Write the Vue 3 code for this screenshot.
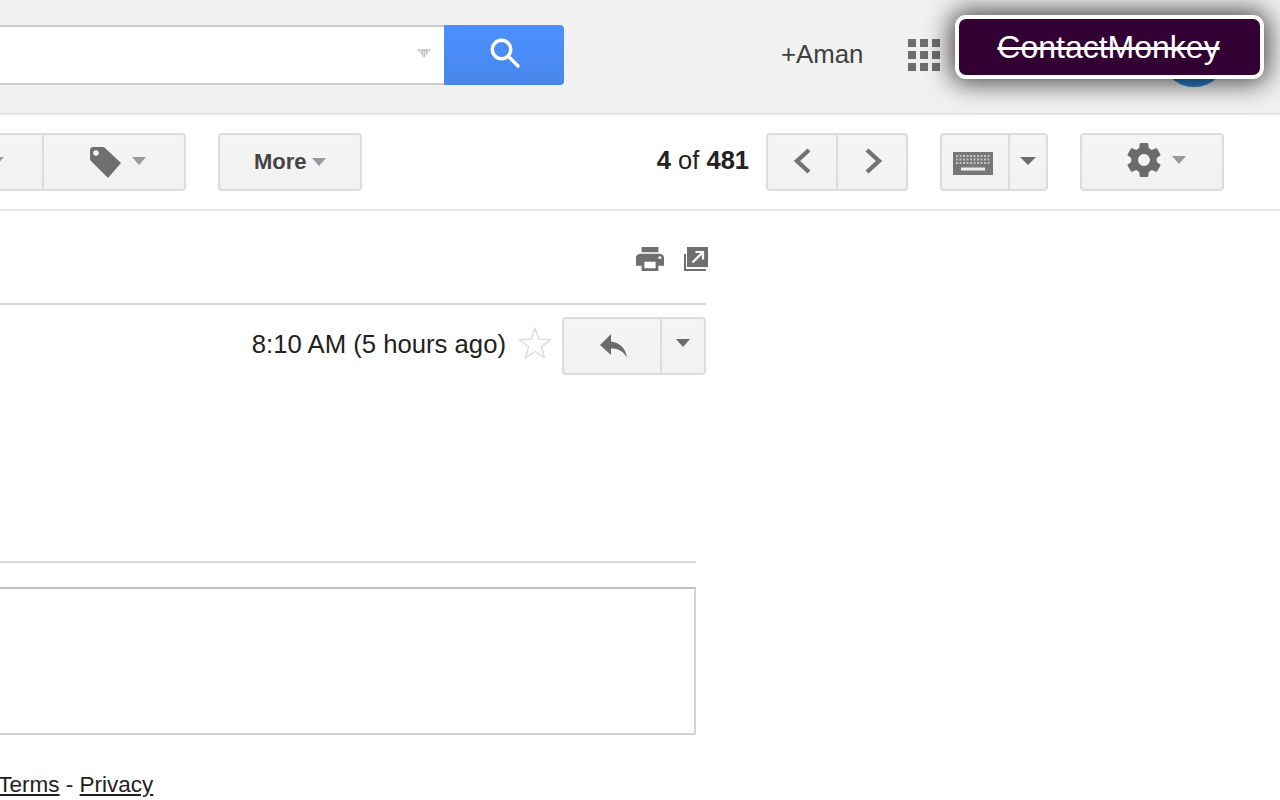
<script setup>
const apps = Array.from({ length: 9 }, (_, i) => i)
</script>

<template>
  <div class="page">
    <header class="top">
      <div class="search">
        <div class="search-field">
          <svg class="search-caret" width="14" height="9" viewBox="0 0 14 9">
            <path d="M0 0h14L7 9z" fill="#c4c4c4" />
            <path d="M3.500 0v5M6 2v7M8.500 2v6M11 0v3" stroke="#ececec" stroke-width="1" />
          </svg>
        </div>
        <button class="search-btn" aria-label="Search">
          <svg width="30" height="30" viewBox="0 0 30 30" fill="none" stroke="#fff" stroke-width="3.4">
            <circle cx="11.500" cy="11.500" r="9.200" />
            <path d="M18.500 18.500L28 28" stroke-linecap="round" />
          </svg>
        </button>
      </div>
      <span class="user">+Aman</span>
      <div class="apps">
        <i v-for="a in apps" :key="a"></i>
      </div>
      <div class="avatar"></div>
    </header>

    <div class="badge">ContactMonkey</div>

    <div class="toolbar">
      <div class="btn labels">
        <div class="seg seg-move"><i class="caret light"></i></div>
        <div class="seg seg-tag">
          <svg width="31" height="31" viewBox="0 0 31 31">
            <path fill-rule="evenodd" fill="#6f6f6f" d="M3.500 0h9.500a3 3 0 0 1 2 .9L31 16 18 31 1 14a3 3 0 0 1-1-2.200V3.500A3.500 3.500 0 0 1 3.500 0zM6 3.200a2.800 2.800 0 1 0 0 5.600 2.800 2.800 0 0 0 0-5.600z" />
          </svg>
          <i class="caret light"></i>
        </div>
      </div>
      <div class="btn more">
        <span>More</span>
        <i class="caret light"></i>
      </div>

      <div class="count"><b>4</b> of <b>481</b></div>

      <div class="btn nav">
        <div class="seg seg-prev">
          <svg width="18" height="26" viewBox="0 0 18 26" fill="none" stroke="#737373" stroke-width="4.4">
            <path d="M16 2L4 13l12 11" />
          </svg>
        </div>
        <div class="seg seg-next">
          <svg width="18" height="26" viewBox="0 0 18 26" fill="none" stroke="#737373" stroke-width="4.4">
            <path d="M2 2l12 11L2 24" />
          </svg>
        </div>
      </div>

      <div class="btn keys">
        <div class="seg seg-key">
          <svg width="40" height="23" viewBox="0 0 40 23">
            <rect width="40" height="23" fill="#777" />
            <path d="M3 4h34M3 7.500h34M3 11h34" stroke="#c2c2c2" stroke-width="2" stroke-dasharray="2 1.500" />
            <rect x="8" y="15.500" width="24" height="3" fill="#eee" />
          </svg>
        </div>
        <div class="seg seg-keycaret"><i class="caret dark wide"></i></div>
      </div>

      <div class="btn settings">
        <svg width="34" height="34" viewBox="2.200 2 19.600 20">
          <path fill="#6b6b6b" d="M19.430 12.980c.04-.32.07-.64.07-.98s-.03-.66-.07-.98l2.110-1.650c.19-.15.24-.42.12-.64l-2-3.460c-.12-.22-.39-.3-.61-.22l-2.490 1c-.52-.4-1.080-.73-1.690-.98l-.38-2.650C14.460 2.180 14.250 2 14 2h-4c-.25 0-.46.18-.49.42l-.38 2.650c-.61.25-1.170.59-1.690.98l-2.490-1c-.23-.09-.49 0-.61.22l-2 3.460c-.13.22-.07.49.12.64l2.110 1.650c-.04.32-.07.65-.07.98s.03.66.07.98l-2.110 1.650c-.19.15-.24.42-.12.64l2 3.460c.12.22.39.3.61.22l2.490-1c.52.4 1.080.73 1.690.98l.38 2.650c.03.24.24.42.49.42h4c.25 0 .46-.18.49-.42l.38-2.650c.61-.25 1.170-.59 1.690-.98l2.490 1c.23.09.49 0 .61-.22l2-3.460c.12-.22.07-.49-.12-.64l-2.110-1.650zM12 15.500c-1.930 0-3.500-1.570-3.500-3.500s1.570-3.500 3.500-3.500 3.500 1.570 3.500 3.500-1.570 3.500-3.500 3.500z" />
        </svg>
        <i class="caret light"></i>
      </div>
    </div>

    <main class="mail">
      <div class="mail-actions">
        <svg width="28" height="24" viewBox="2 3 20 18" preserveAspectRatio="none">
          <path fill="#6f6f6f" d="M19 8H5c-1.660 0-3 1.340-3 3v6h4v4h12v-4h4v-6c0-1.660-1.340-3-3-3zm-3 11H8v-5h8v5zm3-7c-.55 0-1-.45-1-1s.45-1 1-1 1 .45 1 1-.45 1-1 1zm-1-9H6v4h12V3z" />
        </svg>
        <svg width="24" height="24" viewBox="0 0 24 24">
          <path fill="#6f6f6f" d="M3 0h21v20H3z" />
          <path d="M1 7v16h21" fill="none" stroke="#6f6f6f" stroke-width="2" />
          <path d="M8.500 15.500L18 6M11.500 5h7.500v7.500" fill="none" stroke="#fff" stroke-width="2.200" />
        </svg>
      </div>

      <div class="mail-meta">
        <span class="time">8:10 AM (5 hours ago)</span>
        <svg class="star" width="32" height="32" viewBox="0 0 32 32">
          <path d="M16 1.500l4 10.700 11.200.5-8.800 7 3 10.800L16 24.400 6.600 30.500l3-10.800-8.800-7 11.200-.5z" fill="#fff" stroke="#d9d9d9" stroke-width="1.300" />
        </svg>
        <div class="btn reply">
          <div class="seg seg-reply">
            <svg width="27" height="24" viewBox="0 0 27 24">
              <path fill="#6b6b6b" d="M11 0L0 11l11 10v-6.400c7 0 12 2 16 9.400-1-9-7-15.500-16-16.500z" />
            </svg>
          </div>
          <div class="seg seg-replycaret"><i class="caret dark"></i></div>
        </div>
      </div>

      <div class="rule"></div>
      <div class="composer"></div>
      <p class="legal"><a>Terms</a> - <a>Privacy</a></p>
    </main>
  </div>
</template>

<style>
html,
body {
  margin: 0;
  background: #fff;
  overflow: hidden;
}
</style>

<style scoped>
.page {
  position: relative;
  width: 1280px;
  height: 800px;
  overflow: hidden;
  background: #fff;
  font-family: "Liberation Sans", Arial, sans-serif;
  color: #222;
}

.top {
  display: flex;
  align-items: flex-start;
  box-sizing: border-box;
  height: 115px;
  padding-top: 25px;
  background: #f1f1f1;
  border-bottom: 2px solid #e5e5e5;
}

.search {
  display: flex;
  flex: none;
  width: 564px;
  height: 60px;
}

.search-field {
  flex: 1;
  display: flex;
  align-items: center;
  justify-content: flex-end;
  padding-right: 13px;
  background: #fff;
  border-top: 2px solid #ccc;
  border-bottom: 2px solid #ccc;
}

.search-caret {
  margin-bottom: 4px;
}

.search-btn {
  flex: none;
  display: flex;
  align-items: center;
  justify-content: center;
  width: 120px;
  padding: 0 0 4px 2px;
  border: 0;
  border-radius: 0 4px 4px 0;
  background: linear-gradient(#4d90fe, #4787ed);
}

.user {
  flex: none;
  width: 83px;
  margin-left: 217px;
  font-size: 25.8px;
  line-height: 58px;
  color: #404040;
  white-space: nowrap;
}

.apps {
  flex: none;
  display: grid;
  grid-template-columns: repeat(3, 8px);
  grid-auto-rows: 8px;
  gap: 4px;
  margin-left: 44px;
  margin-top: 14px;
}

.apps i {
  background: #6e6e6e;
}

.avatar {
  flex: none;
  width: 68px;
  height: 68px;
  margin-left: 220px;
  margin-top: -6px;
  border-radius: 50%;
  background: #2b84d2;
}

.badge {
  position: absolute;
  top: 15px;
  left: 955px;
  box-sizing: border-box;
  width: 309px;
  height: 64px;
  padding-right: 2px;
  border: 4px solid #fff;
  border-radius: 11px;
  background: #303;
  box-shadow: 0 0 26px 4px rgba(0, 0, 0, 0.72);
  color: #fff;
  font-size: 32px;
  line-height: 56px;
  text-align: center;
  text-decoration: line-through;
  white-space: nowrap;
}

.toolbar {
  display: flex;
  align-items: flex-start;
  box-sizing: border-box;
  height: 96px;
  padding: 18px 56px 0 0;
  border-bottom: 2px solid #e5e5e5;
}

.btn {
  flex: none;
  display: flex;
  box-sizing: border-box;
  height: 58px;
  border: 2px solid #dcdcdc;
  border-radius: 4px;
  background: linear-gradient(#f5f5f5, #f1f1f1);
}

.seg {
  display: flex;
  align-items: center;
  box-sizing: border-box;
}

.seg + .seg {
  border-left: 2px solid #dcdcdc;
}

.caret {
  flex: none;
  display: block;
  width: 0;
  height: 0;
  border-style: solid;
  border-width: 8px 7px 0;
  border-color: #999 transparent transparent;
}

.caret.dark {
  border-top-color: #6b6b6b;
}

.caret.wide {
  border-width: 8px 8px 0;
}

.labels {
  width: 246px;
  margin-left: -60px;
}

.seg-move {
  flex: none;
  width: 100px;
  justify-content: flex-end;
  padding: 0 38px 2px 0;
}

.seg-tag {
  flex: 1;
  gap: 11px;
  padding-left: 46px;
}

.seg-tag .caret {
  margin-bottom: 2px;
}

.more {
  align-items: center;
  gap: 5px;
  width: 144px;
  margin-left: 32px;
  padding-left: 34px;
  color: #444;
  font-size: 22px;
  font-weight: 700;
}

.count {
  margin-left: auto;
  font-size: 25.5px;
  line-height: 54px;
  white-space: nowrap;
}

.nav {
  width: 142px;
  margin-left: 17px;
}

.seg-prev {
  flex: none;
  width: 68px;
  justify-content: center;
  padding-bottom: 2px;
}

.seg-next {
  flex: 1;
  justify-content: center;
  padding: 0 0 2px 4px;
}

.keys {
  width: 108px;
  margin-left: 32px;
}

.seg-key {
  flex: none;
  width: 66px;
  padding: 3px 0 0 11px;
}

.seg-keycaret {
  flex: 1;
  justify-content: center;
  padding-bottom: 2px;
}

.settings {
  align-items: center;
  gap: 11px;
  width: 144px;
  margin-left: 32px;
  padding: 0 0 4px 45px;
}

.mail {
  width: 706px;
}

.mail-actions {
  display: flex;
  justify-content: flex-end;
  gap: 20px;
  box-sizing: border-box;
  height: 94px;
  padding-top: 36px;
  border-bottom: 2px solid #d8d8d8;
}

.mail-actions svg:last-child {
  margin-right: -2px;
}

.mail-meta {
  display: flex;
  justify-content: flex-end;
  align-items: center;
  padding-top: 12px;
}

.time {
  margin-bottom: 4px;
  font-size: 25.7px;
  white-space: nowrap;
}

.star {
  margin: 0 11px 6px 13px;
}

.reply {
  width: 144px;
}

.seg-reply {
  width: 96px;
  padding-left: 36px;
}

.seg-replycaret {
  flex: 1;
  justify-content: center;
  padding-bottom: 6px;
}

.rule {
  width: 696px;
  height: 2px;
  margin-top: 186px;
  background: #d8d8d8;
}

.composer {
  box-sizing: border-box;
  width: 700px;
  height: 148px;
  margin: 24px 0 0 -4px;
  border: 2px solid #d4d4d4;
  border-top-color: #c0c0c0;
}

.legal {
  margin: 37px 0 0 -1.700px;
  font-size: 22.500px;
  line-height: 26px;
  white-space: nowrap;
}

.legal a {
  text-decoration: underline;
}
</style>
